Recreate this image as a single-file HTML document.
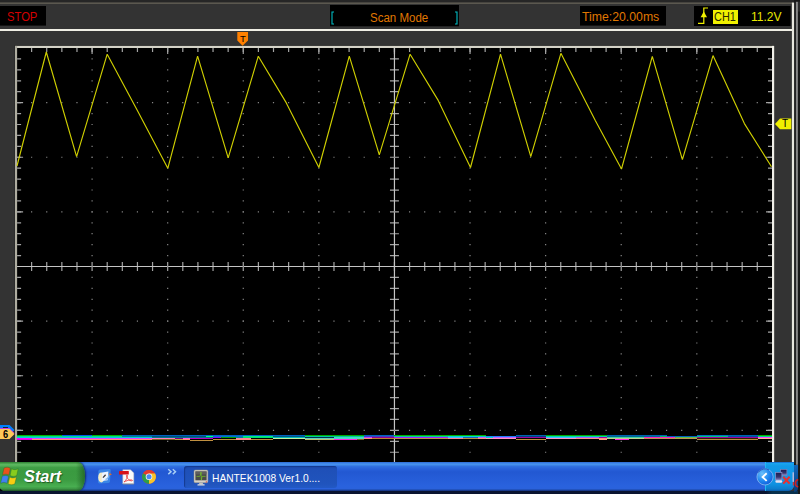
<!DOCTYPE html>
<html><head><meta charset="utf-8"><title>HANTEK1008</title>
<style>
html,body{margin:0;padding:0;}
body{width:800px;height:494px;overflow:hidden;background:#333;position:relative;font-family:"Liberation Sans",sans-serif;}
.abs{position:absolute;}
.box{position:absolute;background:#000;}
.t{position:absolute;white-space:nowrap;font-size:12px;line-height:14px;}
</style></head><body>
<svg class="abs" style="left:0;top:0" width="800" height="494" viewBox="0 0 800 494">
<rect x="0" y="0" width="800" height="494" fill="#333"/>
<rect x="0" y="0" width="800" height="2.4" fill="#262626"/>
<rect x="0" y="2.5" width="793" height="1.4" fill="#605d53"/>
<rect x="0" y="29" width="794" height="2" fill="#efeee4"/>
<rect x="14.2" y="45" width="759.9" height="421" fill="#2a2a2a"/>
<rect x="15" y="45.9" width="759.1" height="420" fill="#d4d2c7"/>
<rect x="15" y="45.9" width="2.2" height="420" fill="#aeaca0"/>
<rect x="771.9" y="45.9" width="2.2" height="420" fill="#f2f1ea"/>
<rect x="17.1" y="48.0" width="754.9" height="420" fill="#000"/>
<line x1="31.018" y1="50.000" x2="771.400" y2="50.000" stroke="#a4a4a4" stroke-width="4" stroke-dasharray="1.2 13.918"/>
<line x1="91.490" y1="51.000" x2="771.400" y2="51.000" stroke="#a4a4a4" stroke-width="6" stroke-dasharray="1.2 74.390"/>
<line x1="31.018" y1="266.500" x2="771.400" y2="266.500" stroke="#a4a4a4" stroke-width="9" stroke-dasharray="1.2 13.918"/>
<line x1="19.100" y1="58.325" x2="19.100" y2="466" stroke="#a4a4a4" stroke-width="4" stroke-dasharray="1.2 9.725"/>
<line x1="20.100" y1="102.025" x2="20.100" y2="466" stroke="#a4a4a4" stroke-width="6" stroke-dasharray="1.2 53.425"/>
<line x1="770.000" y1="58.325" x2="770.000" y2="466" stroke="#a4a4a4" stroke-width="4" stroke-dasharray="1.2 9.725"/>
<line x1="769.000" y1="102.025" x2="769.000" y2="466" stroke="#a4a4a4" stroke-width="6" stroke-dasharray="1.2 53.425"/>
<line x1="394.450" y1="58.325" x2="394.450" y2="466" stroke="#a4a4a4" stroke-width="9" stroke-dasharray="1.2 9.725"/>
<line x1="17.1" y1="266.5" x2="772.0" y2="266.5" stroke="#c4c4c4" stroke-width="1.2"/>
<line x1="394.45" y1="48.0" x2="394.45" y2="466" stroke="#c4c4c4" stroke-width="1.2"/>
<line x1="31.018" y1="102.625" x2="771.400" y2="102.625" stroke="#858585" stroke-width="1.2" stroke-dasharray="1.2 13.918"/>
<line x1="31.018" y1="157.250" x2="771.400" y2="157.250" stroke="#858585" stroke-width="1.2" stroke-dasharray="1.2 13.918"/>
<line x1="31.018" y1="211.875" x2="771.400" y2="211.875" stroke="#858585" stroke-width="1.2" stroke-dasharray="1.2 13.918"/>
<line x1="31.018" y1="321.125" x2="771.400" y2="321.125" stroke="#858585" stroke-width="1.2" stroke-dasharray="1.2 13.918"/>
<line x1="31.018" y1="375.750" x2="771.400" y2="375.750" stroke="#858585" stroke-width="1.2" stroke-dasharray="1.2 13.918"/>
<line x1="31.018" y1="430.375" x2="771.400" y2="430.375" stroke="#858585" stroke-width="1.2" stroke-dasharray="1.2 13.918"/>
<line x1="92.090" y1="58.325" x2="92.090" y2="466" stroke="#858585" stroke-width="1.2" stroke-dasharray="1.2 9.725"/>
<line x1="167.680" y1="58.325" x2="167.680" y2="466" stroke="#858585" stroke-width="1.2" stroke-dasharray="1.2 9.725"/>
<line x1="243.270" y1="58.325" x2="243.270" y2="466" stroke="#858585" stroke-width="1.2" stroke-dasharray="1.2 9.725"/>
<line x1="318.860" y1="58.325" x2="318.860" y2="466" stroke="#858585" stroke-width="1.2" stroke-dasharray="1.2 9.725"/>
<line x1="470.040" y1="58.325" x2="470.040" y2="466" stroke="#858585" stroke-width="1.2" stroke-dasharray="1.2 9.725"/>
<line x1="545.630" y1="58.325" x2="545.630" y2="466" stroke="#858585" stroke-width="1.2" stroke-dasharray="1.2 9.725"/>
<line x1="621.220" y1="58.325" x2="621.220" y2="466" stroke="#858585" stroke-width="1.2" stroke-dasharray="1.2 9.725"/>
<line x1="696.810" y1="58.325" x2="696.810" y2="466" stroke="#858585" stroke-width="1.2" stroke-dasharray="1.2 9.725"/>
<rect x="17" y="435" width="45" height="1" fill="#00b400"/>
<rect x="62" y="435" width="30" height="1" fill="#0058e8"/>
<rect x="92" y="435" width="30" height="1" fill="#00b400"/>
<rect x="122" y="435" width="183" height="1" fill="#0060c0"/>
<rect x="305" y="435" width="59" height="1" fill="#00a800"/>
<rect x="364" y="435" width="30" height="1" fill="#0060c0"/>
<rect x="394" y="435" width="86" height="1" fill="#00b000"/>
<rect x="480" y="435" width="6" height="1" fill="#00b000"/>
<rect x="516" y="435" width="30" height="1" fill="#0060b0"/>
<rect x="546" y="435" width="61" height="1" fill="#00a800"/>
<rect x="607" y="435" width="60" height="1" fill="#0060b0"/>
<rect x="697" y="435" width="31" height="1" fill="#0070c0"/>
<rect x="728" y="435" width="30" height="1" fill="#0060b0"/>
<rect x="758" y="435" width="14" height="1" fill="#00b000"/>
<rect x="17" y="436" width="105" height="1" fill="#00d890"/>
<rect x="122" y="436" width="30" height="1" fill="#008090"/>
<rect x="152" y="436" width="54" height="1" fill="#004c80"/>
<rect x="206" y="436" width="7" height="1" fill="#00ff80"/>
<rect x="213" y="436" width="30" height="1" fill="#0070d0"/>
<rect x="243" y="436" width="30" height="1" fill="#00f080"/>
<rect x="273" y="436" width="32" height="1" fill="#005880"/>
<rect x="305" y="436" width="59" height="1" fill="#00c8a0"/>
<rect x="364" y="436" width="30" height="1" fill="#4040c0"/>
<rect x="394" y="436" width="54" height="1" fill="#00d0a0"/>
<rect x="448" y="436" width="32" height="1" fill="#00d8d8"/>
<rect x="480" y="436" width="6" height="1" fill="#00d0d0"/>
<rect x="486" y="436" width="30" height="1" fill="#2080ff"/>
<rect x="516" y="436" width="30" height="1" fill="#004080"/>
<rect x="546" y="436" width="61" height="1" fill="#00d8b0"/>
<rect x="607" y="436" width="53" height="1" fill="#006890"/>
<rect x="660" y="436" width="7" height="1" fill="#00c060"/>
<rect x="667" y="436" width="30" height="1" fill="#0060c0"/>
<rect x="697" y="436" width="31" height="1" fill="#00c878"/>
<rect x="728" y="436" width="30" height="1" fill="#0050a0"/>
<rect x="758" y="436" width="14" height="1" fill="#00d890"/>
<rect x="17" y="437" width="135" height="1" fill="#00d0d8"/>
<rect x="152" y="437" width="61" height="1" fill="#007888"/>
<rect x="213" y="437" width="8" height="1" fill="#8000ff"/>
<rect x="221" y="437" width="15" height="1" fill="#00a000"/>
<rect x="236" y="437" width="7" height="1" fill="#008888"/>
<rect x="243" y="437" width="30" height="1" fill="#00e070"/>
<rect x="273" y="437" width="32" height="1" fill="#00b8b8"/>
<rect x="305" y="437" width="29" height="1" fill="#003050"/>
<rect x="334" y="437" width="30" height="1" fill="#40e0c0"/>
<rect x="364" y="437" width="8" height="1" fill="#c040ff"/>
<rect x="372" y="437" width="22" height="1" fill="#900090"/>
<rect x="394" y="437" width="54" height="1" fill="#a020ff"/>
<rect x="448" y="437" width="15" height="1" fill="#40c0ff"/>
<rect x="463" y="437" width="15" height="1" fill="#2060c0"/>
<rect x="478" y="437" width="8" height="1" fill="#c060ff"/>
<rect x="486" y="437" width="7" height="1" fill="#00e0c0"/>
<rect x="493" y="437" width="23" height="1" fill="#c060ff"/>
<rect x="516" y="437" width="30" height="1" fill="#a000a0"/>
<rect x="546" y="437" width="30" height="1" fill="#40c0ff"/>
<rect x="576" y="437" width="23" height="1" fill="#a060ff"/>
<rect x="599" y="437" width="8" height="1" fill="#a000a0"/>
<rect x="607" y="437" width="37" height="1" fill="#40d0a0"/>
<rect x="644" y="437" width="31" height="1" fill="#ff20c0"/>
<rect x="675" y="437" width="22" height="1" fill="#60c040"/>
<rect x="697" y="437" width="31" height="1" fill="#a000a0"/>
<rect x="728" y="437" width="30" height="1" fill="#a000a0"/>
<rect x="758" y="437" width="14" height="1" fill="#ff40ff"/>
<rect x="17" y="438" width="15" height="1" fill="#ff00ff"/>
<rect x="32" y="438" width="120" height="1" fill="#e040ff"/>
<rect x="152" y="438" width="23" height="1" fill="#ff80c0"/>
<rect x="175" y="438" width="8" height="1" fill="#800080"/>
<rect x="183" y="438" width="7" height="1" fill="#ff60e0"/>
<rect x="190" y="438" width="23" height="1" fill="#c000c0"/>
<rect x="236" y="438" width="15" height="1" fill="#ff80a0"/>
<rect x="273" y="438" width="32" height="1" fill="#c0f0a0"/>
<rect x="305" y="438" width="29" height="1" fill="#60d0c0"/>
<rect x="334" y="438" width="30" height="1" fill="#50d8c8"/>
<rect x="364" y="438" width="8" height="1" fill="#ff9070"/>
<rect x="372" y="438" width="22" height="1" fill="#c08030"/>
<rect x="394" y="438" width="54" height="1" fill="#c09040"/>
<rect x="448" y="438" width="15" height="1" fill="#ff8090"/>
<rect x="463" y="438" width="15" height="1" fill="#c09040"/>
<rect x="478" y="438" width="8" height="1" fill="#ff9080"/>
<rect x="486" y="438" width="30" height="1" fill="#ff90c0"/>
<rect x="546" y="438" width="30" height="1" fill="#ff90c0"/>
<rect x="576" y="438" width="31" height="1" fill="#ff9080"/>
<rect x="607" y="438" width="37" height="1" fill="#c0d090"/>
<rect x="644" y="438" width="53" height="1" fill="#c09050"/>
<rect x="697" y="438" width="61" height="1" fill="#302000"/>
<rect x="758" y="438" width="14" height="1" fill="#ffb090"/>
<rect x="17" y="439" width="15" height="1" fill="#e000e0"/>
<rect x="32" y="439" width="120" height="1" fill="#ff9070"/>
<rect x="152" y="439" width="23" height="1" fill="#806020"/>
<rect x="175" y="439" width="8" height="1" fill="#c0a040"/>
<rect x="183" y="439" width="7" height="1" fill="#ff9070"/>
<rect x="213" y="439" width="23" height="1" fill="#c09040"/>
<rect x="236" y="439" width="15" height="1" fill="#ff9080"/>
<rect x="251" y="439" width="22" height="1" fill="#c09040"/>
<rect x="305" y="439" width="29" height="1" fill="#c0c070"/>
<rect x="334" y="439" width="23" height="1" fill="#ff20e0"/>
<rect x="357" y="439" width="7" height="1" fill="#806020"/>
<rect x="516" y="439" width="30" height="1" fill="#c09040"/>
<rect x="599" y="439" width="8" height="1" fill="#ffa080"/>
<rect x="615" y="439" width="14" height="1" fill="#ff20e0"/>
<rect x="697" y="439" width="61" height="1" fill="#c09040"/>
<rect x="190" y="440" width="23" height="1" fill="#c09040"/>
<polyline fill="none" stroke="#cfcf00" stroke-width="1.15" stroke-linejoin="bevel" points="17,166 46.3,52 76.6,156.7 107.2,54.2 137.5,110.8 167.8,168.3 197.6,56.2 228.2,157.9 258.3,56.2 286.3,102.9 318.9,167.5 349.3,56.2 379.3,154.8 410.1,54.2 438.2,100.4 470.5,167.5 500.5,54.2 530.8,156.7 560.9,53.3 595.3,120.6 621.5,169 652.3,56.4 682.4,159.6 713,55.6 744.4,123.6 771.5,166.7"/>
<!-- right frame -->
<rect x="794" y="0" width="6" height="494" fill="#181818"/>
<rect x="791.9" y="2.6" width="2.2" height="460" fill="#e9e8df"/>
<rect x="795.9" y="1.8" width="2" height="463" fill="#858585"/>
<rect x="798" y="1.6" width="2" height="10" fill="#2a2a2a"/>
<!-- trigger T top marker -->
<polygon points="237.3,32 248,32 248,40.6 242.6,45.8 237.3,40.6" fill="#ff8000"/>
<!-- right T marker -->
<polygon points="775,124 780,118.5 791.3,118.5 791.3,129.3 780,129.3" fill="#f0f000"/>
<!-- left channel markers -->
<polygon points="0,425 9.5,425 14.5,430 9.5,435 0,435" fill="#0080ff"/>
<polygon points="0,428 9.5,428 14.5,433 9.5,438 0,438" fill="#c040e0"/>
<polygon points="0,429 9.5,429 14.5,434 9.5,439 0,439" fill="#ffc858"/>
<rect x="3" y="427" width="5" height="1" fill="#202020"/>
<rect x="0" y="6" width="46" height="19.6" fill="#000"/>
<rect x="330" y="5" width="129" height="21.3" fill="#000"/>
<rect x="580" y="6" width="86" height="19.6" fill="#000"/>
<rect x="694" y="6" width="96.6" height="20" fill="#000"/>
<!-- brackets -->
<path d="M334,12 H332 V24 H334" fill="none" stroke="#00bcc4" stroke-width="1.1"/>
<path d="M455,12 H457 V24 H455" fill="none" stroke="#00bcc4" stroke-width="1.1"/>
</svg>
<div class="t" style="left:6.7px;top:9.5px;color:#d40000;transform:scaleX(.935);transform-origin:left">STOP</div>
<div class="t" style="left:370.3px;top:11px;color:#e07800;transform:scaleX(.96);transform-origin:left">Scan Mode</div>
<div class="t" style="left:581.6px;top:10.4px;color:#e07800;transform:scaleX(1.022);transform-origin:left">Time:20.00ms</div>
<div class="abs" style="left:713px;top:9.5px;width:25px;height:14px;background:#f0f000"></div>
<div class="t" style="left:714px;top:10.2px;color:#282800;transform:scaleX(.91);transform-origin:left">CH1</div>
<div class="t" style="left:751px;top:10px;color:#e8e800">11.2V</div>
<div class="t" style="left:239.9px;top:31.5px;color:#000;font-size:9.5px">T</div>
<div class="t" style="left:782px;top:117px;color:#000;font-size:10px">T</div>
<div class="t" style="left:3px;top:427.4px;color:#000;font-size:10.5px;font-weight:bold;transform:scaleX(.88);transform-origin:left">6</div>
<svg class="abs" style="left:0;top:0" width="800" height="494" viewBox="0 0 800 494">
<path d="M698,23.4 H703.8 V8 H708" fill="none" stroke="#f0f000" stroke-width="1.2"/>
<polygon points="703.8,11.5 707,17.2 700.6,17.2" fill="#f0f000"/>
</svg>
<!-- TASKBAR -->
<div id="tb" class="abs" style="left:0;top:462px;width:794.2px;height:29px;background:linear-gradient(#2a62cc 0,#3c84e8 1px,#4590ec 2.5px,#3070e0 4.5px,#2860da 7px,#2258d2 10px,#2962de 24px,#2a62dc 26.5px,#2050b8 27.7px,#142c70 29px);border-bottom-right-radius:6px;overflow:hidden">
 <div class="abs" style="left:764.6px;top:0;width:30px;height:29px;background:linear-gradient(#1460c8 0,#1aa4ee 1.5px,#129ae8 4px,#0f92e2 22px,#0c7ccc 27px,#0a5cac 29px);border-left:1px solid #22b8f2"></div>
 <div class="abs" style="left:-4px;top:0;width:88.5px;height:29px;border-radius:0 7px 7px 0/0 14px 14px 0;background:linear-gradient(#2f7f35 0,#3c9440 1px,#5cb860 2.2px,#56b25a 3.6px,#40a046 5.5px,#3a9a40 9px,#3c9c42 18px,#48ae50 24.5px,#3c9444 27px,#2a6c30 28.2px,#1c4a22 29px);box-shadow:1px 0 2px #102a70;overflow:hidden"><div style="position:absolute;right:0;top:0;width:9px;height:29px;background:linear-gradient(90deg,rgba(20,70,25,0),rgba(20,70,25,.55))"></div></div>
 <div class="abs" style="left:23.5px;top:4.5px;color:#fff;font:italic bold 16px/20px 'Liberation Sans',sans-serif;text-shadow:1px 1px 1px #1e5a20;white-space:nowrap;transform:scaleX(1.02);transform-origin:left">Start</div>
 <div class="abs" style="left:183.5px;top:4px;width:153px;height:22px;border-radius:3px;background:linear-gradient(#1c49ad 0,#1f50b8 4px,#2054bd 18px,#2259c6 22px);box-shadow:inset 1px 1px 1px #143a90"></div>
 <div class="abs" style="left:211.5px;top:9px;color:#fff;font:11px/14px 'Liberation Sans',sans-serif;white-space:nowrap;transform:scaleX(.93);transform-origin:left">HANTEK1008 Ver1.0....</div>
</div>
<svg class="abs" style="left:0;top:0" width="800" height="494" viewBox="0 0 800 494">
<!-- windows flag -->
<g transform="translate(0.6,467.2) scale(1.06)" stroke="#1e5a24" stroke-width=".5" stroke-opacity=".6">
<path d="M3.2,0.8 C5.4,-0.3 7.2,-0.2 9.2,1 L7.8,7.4 C5.8,6.3 4,6.3 1.8,7.3 Z" fill="#ea521c"/>
<path d="M10.3,1.5 C12.3,2.6 14.2,2.6 16.6,1.4 L15.2,7.8 C12.9,9 11,8.9 8.9,7.9 Z" fill="#86cc1e"/>
<path d="M1.5,8.6 C3.7,7.5 5.5,7.6 7.5,8.7 L6,15.2 C4,14.1 2.2,14.1 0,15.2 Z" fill="#4080f0"/>
<path d="M8.6,9.3 C10.6,10.4 12.5,10.4 14.9,9.2 L13.4,15.7 C11.1,16.9 9.2,16.8 7.1,15.8 Z" fill="#f8cc12"/>
</g>
<path d="M0,488.5 L3,491 L0,491 Z" fill="#080808"/>
<!-- quick launch 1: show desktop -->
<g>
<path d="M100,469.6 L109.5,469 Q110.8,469 110.7,470.4 L110,481.6 Q109.8,483 108.4,483 L99.4,483.4 Q98,483.4 98,482 L98.4,471.2 Q98.5,469.7 100,469.6 Z" fill="#3a86e6"/>
<ellipse cx="101.3" cy="477.4" rx="3.1" ry="5" fill="#f4ecc8"/>
<path d="M102.2,472.6 L108.4,471.6 L107.6,480.2 L101.6,481 Z" fill="#eef5ff"/>
<path d="M105.5,479.5 C108,479 109.3,476.5 108.8,474.2" fill="none" stroke="#78b4f4" stroke-width="1.3"/>
<path d="M103,477.6 L105.6,474.8" stroke="#3a3a3a" stroke-width="1.3"/>
<path d="M109.4,472.9 L112,474.3 L109.4,475.6 Z" fill="#ea6a1c"/>
</g>
<!-- pdf -->
<g>
<path d="M122.8,469.8 H130.6 L133.8,473 V483.9 H122.8 Z" fill="#fafafa" stroke="#b8b8b8" stroke-width=".5"/><rect x="123" y="483.6" width="10.8" height=".8" fill="#707890"/>
<rect x="119" y="471" width="9.8" height="3.4" rx=".5" fill="#d81018"/>
<path d="M124,482 C126.5,480 128,476.5 127.3,475.2 C126.6,474.2 125.9,476 127.4,478.2 C128.8,480.2 131.3,481.5 132.4,480.6 C133,479.6 129,479.4 124,482 Z" fill="none" stroke="#ee5050" stroke-width="1"/>
</g>
<!-- chrome -->
<g>
<circle cx="149" cy="476.8" r="6.9" fill="#e33b2e"/>
<path d="M149,476.8 L143.02,473.35 A6.9,6.9 0 0 0 149,483.7 L152.45,477.7 Z" fill="#2e9e48"/>
<path d="M149,476.8 L149,483.7 A6.9,6.9 0 0 0 154.98,473.35 L149,473.35 Z" fill="#f7c52b"/>
<path d="M143.02,473.35 A6.9,6.9 0 0 1 154.98,473.35 L149,473.35 Z" fill="#e33b2e"/>
<circle cx="149" cy="476.8" r="3.3" fill="#f4f4f4"/>
<circle cx="149" cy="476.8" r="2.5" fill="#4a8af4"/>
</g>
<!-- chevrons -->
<path d="M168.3,469.3 L171,471.7 L168.3,474.1 M172.8,469.3 L175.5,471.7 L172.8,474.1" fill="none" stroke="#a8cef6" stroke-width="1.45"/>
<!-- task icon: monitor -->
<g>
<rect x="194" y="470" width="13.9" height="12.7" rx="1.2" fill="#d6d2c6" stroke="#8a8880" stroke-width=".5"/>
<rect x="195.4" y="471.4" width="11.2" height="8.9" fill="#4a4a4a"/>
<rect x="195.4" y="471.4" width="11.2" height="3" fill="#666" opacity=".7"/>
<path d="M196.5,476.4 H199.6 L200.4,475.2 L201,472 L201.4,480 L202,476.4 H205.6" fill="none" stroke="#74c028" stroke-width=".75"/>
<rect x="205.8" y="481.4" width="1.1" height="1.1" fill="#e03030"/>
<rect x="199.2" y="482.7" width="3.7" height="1.6" fill="#c8c6be"/>
<rect x="197.4" y="484.2" width="7.3" height="1.4" rx=".6" fill="#e2e2e0"/>
</g>
<!-- tray: circle with < -->
<defs><radialGradient id="cg" cx="0.32" cy="0.3" r="0.8"><stop offset="0" stop-color="#6cc0fa"/><stop offset=".55" stop-color="#2088f0"/><stop offset="1" stop-color="#0e58d8"/></radialGradient>
<linearGradient id="mg" x1="0" y1="0" x2="0" y2="1"><stop offset="0" stop-color="#1c1c50"/><stop offset=".6" stop-color="#34346e"/><stop offset="1" stop-color="#8a84c0"/></linearGradient></defs>
<circle cx="765.05" cy="476.9" r="8.1" fill="url(#cg)" stroke="#8cbcf0" stroke-width=".8"/>
<path d="M758.2,472.6 A8.1,8.1 0 0 1 769,469.9" fill="none" stroke="#1c50b8" stroke-width=".9"/>
<path d="M766.7,473.3 L762.6,477.1 L766.7,480.9" fill="none" stroke="#fff" stroke-width="1.9"/>
<!-- network icon -->
<g>
<rect x="780.6" y="469.4" width="6.3" height="5.8" fill="url(#mg)" stroke="#7c86c0" stroke-width=".7"/>
<rect x="775.6" y="472.4" width="6.3" height="7.6" fill="url(#mg)" stroke="#8a94cc" stroke-width=".7"/>
<rect x="775.4" y="480.2" width="6.8" height="2.6" rx="1.2" fill="#e4e0f0"/>
<path d="M783.2,476.8 L789.6,483.6 M789.6,476.8 L783.2,483.6" stroke="#e83030" stroke-width="2.1"/>
<rect x="792.5" y="472.3" width="1.7" height="9.5" fill="#b4b8dc"/>
<rect x="792.8" y="482" width="1.4" height="3.5" fill="#d83030"/>
</g>
</svg>
<div class="abs" style="left:0;top:491px;width:798px;height:3px;background:linear-gradient(90deg,#0a1430 0,#0a1430 766px,#08304c 772px)"></div>
<div class="abs" style="left:794.2px;top:464.5px;width:4px;height:27.3px;background:linear-gradient(#1266b8,#0b4e98 60%,#083c78);border-bottom-right-radius:4px"></div>
<svg class="abs" style="left:0;top:0" width="800" height="494" viewBox="0 0 800 494"><path d="M798.2,479.5 a3.6,3.8 0 0 0 0,7.4" fill="none" stroke="#d02020" stroke-width="1.5"/></svg>
</body></html>
